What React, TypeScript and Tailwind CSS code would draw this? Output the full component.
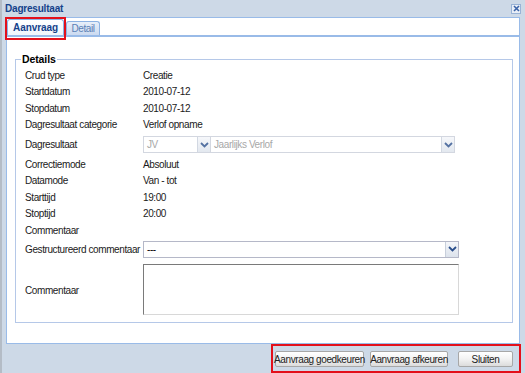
import React from "react";

const font = { fontFamily: '"Liberation Sans", Arial, sans-serif' };

function Chevron() {
  return (
    <svg width="9" height="6" viewBox="0 0 9 6">
      <path d="M1 1 L4.5 4.5 L8 1" fill="none" stroke="#2b4f8c" strokeWidth="1.8" />
    </svg>
  );
}

function Trigger({ disabled }: { disabled?: boolean }) {
  return (
    <div
      className={`w-[13px] h-full flex items-center justify-center border-l border-[#c8cfdb] bg-gradient-to-b from-[#f4f6fa] to-[#dde3ec] ${
        disabled ? "opacity-80" : ""
      }`}
    >
      <Chevron />
    </div>
  );
}

function Row({ label, value, h = "h-[16.5px]" }: { label: string; value?: string; h?: string }) {
  return (
    <div className={`flex items-center ${h}`}>
      <div className="w-[118px] shrink-0 whitespace-nowrap">{label}</div>
      {value && <div className="whitespace-nowrap">{value}</div>}
    </div>
  );
}

function Btn({ children, w, className = "" }: { children: React.ReactNode; w: string; className?: string }) {
  return (
    <div
      className={`${w} ${className} h-[16px] flex items-center justify-center whitespace-nowrap border border-[#a7a7a7] rounded-[2px] bg-gradient-to-b from-[#ffffff] via-[#f2f2f2] to-[#dcdcdc] text-[#222]`}
    >
      {children}
    </div>
  );
}

export default function App() {
  return (
    <div
      className="relative w-[525px] h-[373px] bg-[#cdd9e7] text-[10px] tracking-[-0.4px] text-[#1a1a1a] overflow-hidden border-l-2 border-[#b4bcc6]"
      style={font}
    >
      {/* Title bar */}
      <div className="h-[17px] flex items-center justify-between pl-[3px] pr-[4px]">
        <span className="font-bold text-[#15428b] text-[10px] tracking-[-0.2px]">Dagresultaat</span>
        <div className="w-[10px] h-[10px] border border-[#99b3d6] bg-[#e8eef7] flex items-center justify-center">
          <svg width="7" height="7" viewBox="0 0 7 7">
            <path d="M1 1 L6 6 M6 1 L1 6" stroke="#3a63a8" strokeWidth="1.6" />
          </svg>
        </div>
      </div>

      {/* Panel */}
      <div className="ml-[4px] w-[514px] h-[327px] border border-[#99bbe8] bg-white flex flex-col">
        {/* Tab strip */}
        <div className="h-[19px] flex items-end border-b-[2px] border-[#99bbe8]">
          <div className="w-[57px] h-[16px] flex items-center justify-center rounded-t-[3px] border border-b-0 border-[#8db2e3] bg-gradient-to-b from-white to-[#f0f5fc] font-bold text-[#15428b] text-[10px] tracking-[-0.1px]">
            Aanvraag
          </div>
          <div className="w-[34px] h-[14px] ml-[2px] flex items-center justify-center rounded-t-[3px] border border-b-0 border-[#8db2e3] bg-gradient-to-b from-[#e8eff9] to-[#cbdaf0] text-[#5a7fb5]">
            Detail
          </div>
        </div>

        {/* Body */}
        <div className="flex-1 pl-[8px] pr-[6px] pt-[16px] pb-[15px]">
          <fieldset className="h-[270px] border border-[#b5c8e8] pl-[9px] pr-[8px]">
            <legend className="font-bold text-black text-[10.5px] tracking-[-0.1px] -ml-[4px] px-[1px] leading-[13px]">
              Details
            </legend>
            <div className="flex flex-col pt-[1px]">
              <Row label="Crud type" value="Creatie" />
              <Row label="Startdatum" value="2010-07-12" />
              <Row label="Stopdatum" value="2010-07-12" />
              <Row label="Dagresultaat categorie" value="Verlof opname" />
              <div className="flex items-center h-[23px]">
                <div className="w-[118px] shrink-0">Dagresultaat</div>
                <div className="flex h-[17px]">
                  <div className="w-[68px] h-full flex border border-[#d3d7e0] bg-white">
                    <div className="flex-1 flex items-center pl-[3px] text-[#a8a8a8]">JV</div>
                    <Trigger disabled />
                  </div>
                  <div className="w-[244px] h-full flex border border-[#d3d7e0] border-l-0 bg-white">
                    <div className="flex-1 flex items-center pl-[3px] text-[#a8a8a8]">Jaarlijks Verlof</div>
                    <Trigger disabled />
                  </div>
                </div>
              </div>
              <Row label="Correctiemode" value="Absoluut" />
              <Row label="Datamode" value="Van - tot" />
              <Row label="Starttijd" value="19:00" />
              <Row label="Stoptijd" value="20:00" />
              <Row label="Commentaar" />
              <div className="flex items-center h-[21px]">
                <div className="w-[118px] shrink-0 whitespace-nowrap">Gestructureerd commentaar</div>
                <div className="w-[316px] h-[17px] flex border border-[#b5b8c8] bg-white">
                  <div className="flex-1 flex items-center pl-[3px] text-black">---</div>
                  <Trigger />
                </div>
              </div>
              <div className="flex items-center mt-[4px]">
                <div className="w-[118px] shrink-0 pt-[2px]">Commentaar</div>
                <div className="w-[316px] h-[51px] border border-[#7a7a7a] border-r-[#d8d8d8] border-b-[#d8d8d8] bg-white" />
              </div>
            </div>
          </fieldset>
        </div>
      </div>

      {/* Footer buttons */}
      <div className="h-[29px] flex items-center justify-end pr-[12px] gap-[6px] pt-[1px]">
        <Btn w="w-[89px]">Aanvraag goedkeuren</Btn>
        <Btn w="w-[78px]">Aanvraag afkeuren</Btn>
        <Btn w="w-[55px]" className="ml-[4px]">Sluiten</Btn>
      </div>

      {/* Red highlight annotations */}
      <div className="absolute left-[3px] top-[17px] w-[61px] h-[23px] border-2 border-[#e3101b]" />
      <div className="absolute left-[269px] top-[344px] w-[250px] h-[29px] border-2 border-[#e3101b]" />
    </div>
  );
}
